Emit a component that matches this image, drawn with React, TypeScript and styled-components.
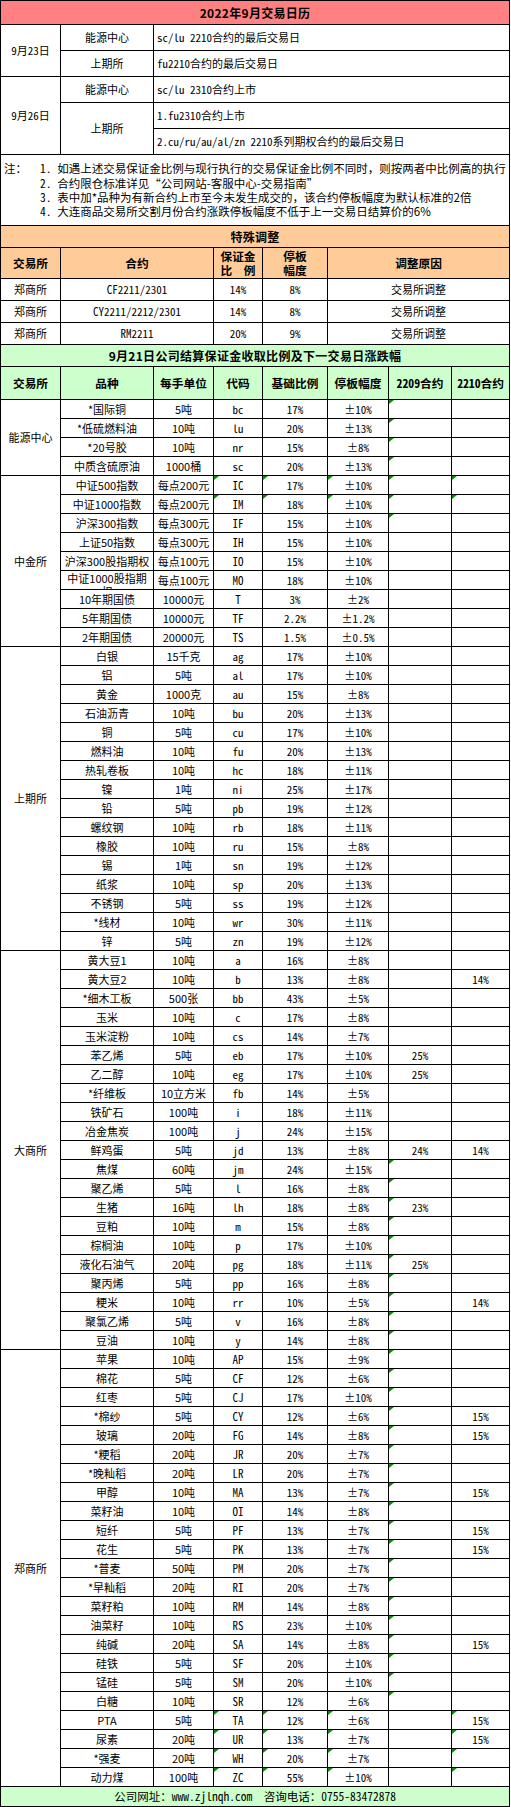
import React from 'react';
import styled, { createGlobalStyle, css } from 'styled-components';

const SANS = `"Noto Sans CJK SC", "Liberation Sans", sans-serif`;
const MONO = `"Noto Sans Mono CJK SC", "Liberation Mono", "Noto Sans CJK SC", monospace`;

const GlobalStyle = createGlobalStyle`
  html, body { margin: 0; padding: 0; background: #ffffff; }
  body { font-family: ${SANS}; color: #000; }
  #root { width: 511px; }
`;

const Sheet = styled.table`
  width: 510px;
  border-collapse: collapse;
  table-layout: fixed;
`;

const Row = styled.tr<{ $h: number }>`
  height: ${p => p.$h}px;
`;

const Cell = styled.td<{ $mono?: boolean; $flag?: boolean; $left?: boolean }>`
  position: relative;
  border: 1px solid #000;
  padding: 0 ${p => (p.$left ? 3 : 1)}px;
  text-align: ${p => (p.$left ? 'left' : 'center')};
  vertical-align: middle;
  white-space: nowrap;
  overflow: hidden;
  font-family: ${p => (p.$mono ? MONO : SANS)};
  font-size: 11px;
  font-weight: 400;
  line-height: 13px;
  color: #000;
  ${p =>
    p.$flag &&
    css`
      &::before {
        content: '';
        position: absolute;
        left: 0;
        top: 0;
        border-style: solid;
        border-width: 4px 5px 0 0;
        border-color: #0a8a0a transparent transparent transparent;
      }
    `}
`;

const BannerCell = styled(Cell)<{ $bg: string }>`
  background: ${p => p.$bg};
  font-weight: 700;
  font-size: 12px;
  letter-spacing: 0.3px;
`;

const HeadCell = styled(Cell)`
  font-weight: 700;
  font-size: 11.7px;
  line-height: 14px;
  background: inherit;
`;

const HeadRow = styled(Row)<{ $bg: string }>`
  background: ${p => p.$bg};
`;

const NoteCell = styled.td`
  border: 1px solid #000;
  padding: 0 3px;
  vertical-align: middle;
  font-family: ${SANS};
  font-size: 11.5px;
  line-height: 14.4px;
  white-space: nowrap;
`;

const NoteWrap = styled.div`
  display: flex;
  align-items: flex-start;
`;

const NoteLabel = styled.span`
  flex: none;
  width: 36px;
`;

const NoteList = styled.ol`
  margin: 0;
  padding: 0;
  list-style: none;
`;

const NoteItem = styled.li`
  margin: 0;
`;

const NoteNum = styled.span`
  font-family: ${MONO};
`;

const Clip = styled.div`
  height: 18px;
  overflow: hidden;
  white-space: normal;
  line-height: 13px;
  padding: 1px 4px 0;
  box-sizing: border-box;
`;

const FooterCell = styled(Cell)`
  background: #ccffcc;
  font-size: 11.5px;
`;

const RED = '#ff8080';
const ORANGE = '#ffcc99';
const GREEN = '#ccffcc';

const COLS = [60, 93, 60, 49, 65, 61, 63, 58];

type Group = { exchange: string; rows: string[] };

const groups: Group[] = [
  {
    exchange: '能源中心',
    rows: [
      '*国际铜|5吨|bc|17%|±10%|||9',
      '*低硫燃料油|10吨|lu|20%|±13%|||9',
      '*20号胶|10吨|nr|15%|±8%|||9',
      '中质含硫原油|1000桶|sc|20%|±13%|||9',
    ],
  },
  {
    exchange: '中金所',
    rows: [
      '中证500指数|每点200元|IC|17%|±10%|||kbl90',
      '中证1000指数|每点200元|IM|18%|±10%|||kbl90',
      '沪深300指数|每点300元|IF|15%|±10%|||9',
      '上证50指数|每点300元|IH|15%|±10%|||',
      '沪深300股指期权|每点100元|IO|15%|±10%|||',
      '中证1000股指期权|每点100元|MO|18%|±10%|||w',
      '10年期国债|10000元|T|3%|±2%|||',
      '5年期国债|10000元|TF|2.2%|±1.2%|||',
      '2年期国债|20000元|TS|1.5%|±0.5%|||',
    ],
  },
  {
    exchange: '上期所',
    rows: [
      '白银|15千克|ag|17%|±10%|||',
      '铝|5吨|al|17%|±10%|||',
      '黄金|1000克|au|15%|±8%|||',
      '石油沥青|10吨|bu|20%|±13%|||',
      '铜|5吨|cu|17%|±10%|||',
      '燃料油|10吨|fu|20%|±13%|||',
      '热轧卷板|10吨|hc|18%|±11%|||',
      '镍|1吨|ni|25%|±17%|||',
      '铅|5吨|pb|19%|±12%|||',
      '螺纹钢|10吨|rb|18%|±11%|||',
      '橡胶|10吨|ru|15%|±8%|||',
      '锡|1吨|sn|19%|±12%|||',
      '纸浆|10吨|sp|20%|±13%|||',
      '不锈钢|5吨|ss|19%|±12%|||',
      '*线材|10吨|wr|30%|±11%|||',
      '锌|5吨|zn|19%|±12%|||',
    ],
  },
  {
    exchange: '大商所',
    rows: [
      '黄大豆1|10吨|a|16%|±8%|||',
      '黄大豆2|10吨|b|13%|±8%||14%|',
      '*细木工板|500张|bb|43%|±5%|||',
      '玉米|10吨|c|17%|±8%|||',
      '玉米淀粉|10吨|cs|14%|±7%|||',
      '苯乙烯|5吨|eb|17%|±10%|25%||',
      '乙二醇|10吨|eg|17%|±10%|25%||',
      '*纤维板|10立方米|fb|14%|±5%|||',
      '铁矿石|100吨|i|18%|±11%|||',
      '冶金焦炭|100吨|j|24%|±15%|||',
      '鲜鸡蛋|5吨|jd|13%|±8%|24%|14%|',
      '焦煤|60吨|jm|24%|±15%|||9',
      '聚乙烯|5吨|l|16%|±8%|||9',
      '生猪|16吨|lh|18%|±8%|23%||9',
      '豆粕|10吨|m|15%|±8%|||9',
      '棕榈油|10吨|p|17%|±10%|||9',
      '液化石油气|20吨|pg|18%|±11%|25%||9',
      '聚丙烯|5吨|pp|16%|±8%|||9',
      '粳米|10吨|rr|10%|±5%||14%|9',
      '聚氯乙烯|5吨|v|16%|±8%|||9',
      '豆油|10吨|y|14%|±8%|||9',
    ],
  },
  {
    exchange: '郑商所',
    rows: [
      '苹果|10吨|AP|15%|±9%|||9',
      '棉花|5吨|CF|12%|±6%|||9',
      '红枣|5吨|CJ|17%|±10%|||9',
      '*棉纱|5吨|CY|12%|±6%||15%|9',
      '玻璃|20吨|FG|14%|±8%||15%|9',
      '*粳稻|20吨|JR|20%|±7%|||9',
      '*晚籼稻|20吨|LR|20%|±7%|||9',
      '甲醇|10吨|MA|13%|±7%||15%|9',
      '菜籽油|10吨|OI|14%|±8%|||9',
      '短纤|5吨|PF|13%|±7%||15%|9',
      '花生|5吨|PK|13%|±7%||15%|9',
      '*普麦|50吨|PM|20%|±7%|||9',
      '*早籼稻|20吨|RI|20%|±7%|||9',
      '菜籽粕|10吨|RM|14%|±8%|||9',
      '油菜籽|10吨|RS|23%|±10%|||9',
      '纯碱|20吨|SA|14%|±8%||15%|9',
      '硅铁|5吨|SF|20%|±10%|||9',
      '锰硅|5吨|SM|20%|±10%|||9',
      '白糖|10吨|SR|12%|±6%|||9',
      'PTA|5吨|TA|12%|±6%||15%|kbl0',
      '尿素|20吨|UR|13%|±7%||15%|kbl0',
      '*强麦|20吨|WH|20%|±7%|||kbl0',
      '动力煤|100吨|ZC|55%|±10%|||kbl0',
    ],
  },
];

const special = [
  ['郑商所', 'CF2211/2301', '14%', '8%', '交易所调整'],
  ['郑商所', 'CY2211/2212/2301', '14%', '8%', '交易所调整'],
  ['郑商所', 'RM2211', '20%', '9%', '交易所调整'],
];

const notes = [
  '如遇上述交易保证金比例与现行执行的交易保证金比例不同时，则按两者中比例高的执行',
  '合约限仓标准详见“公司网站-客服中心-交易指南”',
  '表中加*品种为有新合约上市至今未发生成交的，该合约停板幅度为默认标准的2倍',
  '大连商品交易所交割月份合约涨跌停板幅度不低于上一交易日结算价的6%',
];

export default function App() {
  return (
    <>
      <GlobalStyle />
      <Sheet>
        <colgroup>
          {COLS.map((w, i) => (
            <col key={i} style={{ width: w }} />
          ))}
        </colgroup>
        <tbody>
          <Row $h={24}>
            <BannerCell $bg={RED} colSpan={8}>
              2022年9月交易日历
            </BannerCell>
          </Row>
          <Row $h={26}>
            <Cell $mono rowSpan={2}>9月23日</Cell>
            <Cell>能源中心</Cell>
            <Cell $mono $left colSpan={6}>sc/lu 2210合约的最后交易日</Cell>
          </Row>
          <Row $h={26}>
            <Cell>上期所</Cell>
            <Cell $mono $left colSpan={6}>fu2210合约的最后交易日</Cell>
          </Row>
          <Row $h={26}>
            <Cell $mono rowSpan={3}>9月26日</Cell>
            <Cell>能源中心</Cell>
            <Cell $mono $left colSpan={6}>sc/lu 2310合约上市</Cell>
          </Row>
          <Row $h={26}>
            <Cell rowSpan={2}>上期所</Cell>
            <Cell $mono $left colSpan={6}>1.fu2310合约上市</Cell>
          </Row>
          <Row $h={26}>
            <Cell $mono $left colSpan={6}>2.cu/ru/au/al/zn 2210系列期权合约的最后交易日</Cell>
          </Row>
          <Row $h={71}>
            <NoteCell colSpan={8}>
              <NoteWrap>
                <NoteLabel>注：</NoteLabel>
                <NoteList>
                  {notes.map((n, i) => (
                    <NoteItem key={i}>
                      <NoteNum>{i + 1}. </NoteNum>
                      {n}
                    </NoteItem>
                  ))}
                </NoteList>
              </NoteWrap>
            </NoteCell>
          </Row>
          <Row $h={22}>
            <BannerCell $bg={ORANGE} colSpan={8}>特殊调整</BannerCell>
          </Row>
          <HeadRow $h={31} $bg={ORANGE}>
            <HeadCell>交易所</HeadCell>
            <HeadCell colSpan={2}>合约</HeadCell>
            <HeadCell>
              保证金
              <br />
              比　例
            </HeadCell>
            <HeadCell>
              停板
              <br />
              幅度
            </HeadCell>
            <HeadCell colSpan={3}>调整原因</HeadCell>
          </HeadRow>
          {special.map((s, i) => (
            <Row $h={22} key={i}>
              <Cell>{s[0]}</Cell>
              <Cell $mono colSpan={2}>{s[1]}</Cell>
              <Cell $mono>{s[2]}</Cell>
              <Cell $mono>{s[3]}</Cell>
              <Cell colSpan={3}>{s[4]}</Cell>
            </Row>
          ))}
          <Row $h={22}>
            <BannerCell $bg={GREEN} colSpan={8}>
              9月21日公司结算保证金收取比例及下一交易日涨跌幅
            </BannerCell>
          </Row>
          <HeadRow $h={33} $bg={GREEN}>
            <HeadCell>交易所</HeadCell>
            <HeadCell>品种</HeadCell>
            <HeadCell>每手单位</HeadCell>
            <HeadCell>代码</HeadCell>
            <HeadCell>基础比例</HeadCell>
            <HeadCell>停板幅度</HeadCell>
            <HeadCell $mono>2209合约</HeadCell>
            <HeadCell $mono>2210合约</HeadCell>
          </HeadRow>
          {groups.map(g =>
            g.rows.map((r, i) => {
              const [name, unit, code, base, limit, c09, c10, flags = ''] = r.split('|');
              return (
                <Row $h={19} key={g.exchange + code}>
                  {i === 0 && <Cell rowSpan={g.rows.length}>{g.exchange}</Cell>}
                  <Cell>{flags.includes('w') ? <Clip>{name}</Clip> : name}</Cell>
                  <Cell>{unit}</Cell>
                  <Cell $mono $flag={flags.includes('k')}>{code}</Cell>
                  <Cell $mono $flag={flags.includes('b')}>{base}</Cell>
                  <Cell $mono $flag={flags.includes('l')}>{limit}</Cell>
                  <Cell $mono $flag={flags.includes('9')}>{c09}</Cell>
                  <Cell $mono $flag={flags.includes('0')}>{c10}</Cell>
                </Row>
              );
            })
          )}
          <Row $h={20}>
            <FooterCell $mono colSpan={8}>
              公司网址：www.zjlnqh.com　咨询电话：0755-83472878
            </FooterCell>
          </Row>
        </tbody>
      </Sheet>
    </>
  );
}
